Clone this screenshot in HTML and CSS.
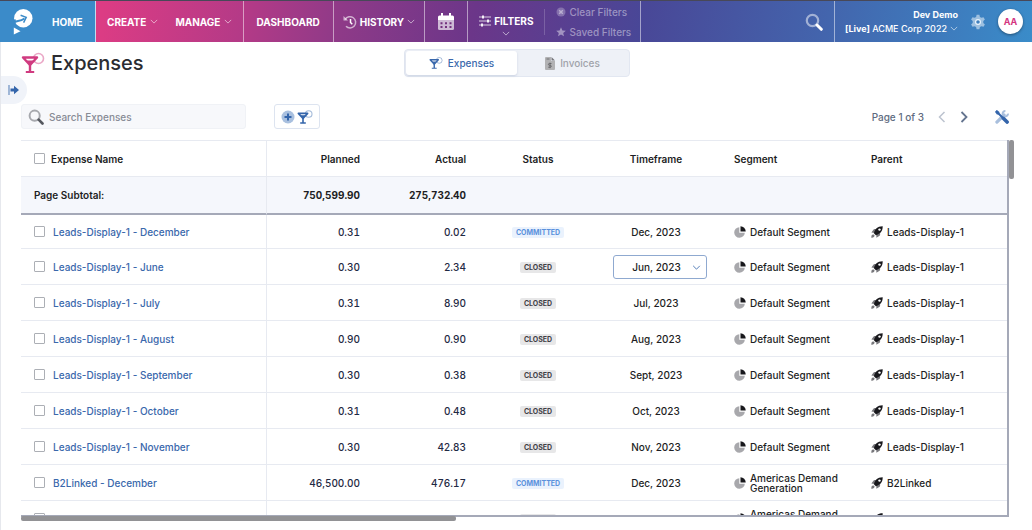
FILE: index.html
```html
<!DOCTYPE html>
<html lang="en">
<head>
<meta charset="utf-8">
<title>Expenses</title>
<link rel="stylesheet" href="styles.css">
</head>
<body>
<svg class="sprite" aria-hidden="true">
  <symbol id="chevron" viewBox="0 0 10 6"><path d="M1 1l4 4 4-4" fill="none" stroke="currentColor"/></symbol>
  <symbol id="glass" viewBox="0 0 24 22"><circle cx="17.500" cy="6.500" r="5" fill="none" stroke="currentColor" stroke-width="1.600" opacity=".45"/><path d="M2 5.500h14L9 13z" fill="#fff" stroke="currentColor" stroke-width="2.400" stroke-linejoin="round"/><path d="M5 8.500h8L9 12.500zM7.800 12h2.400v7h3v2h-8.400v-2h3z" fill="currentColor"/></symbol>
  <symbol id="search" viewBox="0 0 18 18"><circle cx="7.500" cy="7.500" r="5.700" fill="none" stroke="currentColor" stroke-width="2.200" opacity=".5"/><path d="M12 12l4.300 4.300" stroke="currentColor" stroke-width="3" stroke-linecap="round"/></symbol>
  <symbol id="pie" viewBox="0 0 12 12"><path d="M5.300 1.200v5.500h5.500A5.300 5.300 0 1 1 5.300 1.200z" fill="#a8a8ac"/><path d="M6.500.2a5.300 5.300 0 0 1 5.200 5.300H6.500z" fill="#18181c"/></symbol>
  <symbol id="rocket" viewBox="0 0 12 12"><path d="M.4 6.600l2.200-3.200q.4-.5 1-.5h2.600L3.500 7zM5.300 8.700l3.800-2.500v2.600q0 .6-.5 1l-3.200 2z" fill="#77777b"/><path d="M2.900 7.200C4 3.500 6 .3 11.700.3 11.700 6 8.500 8 4.900 9.200z" fill="#18181c"/><circle cx="8.500" cy="3.600" r="1.200" fill="#fff"/><path d="M.3 11.700C.3 9.500.8 8.300 2.300 8.400c1.400.1 1.600 1.400.8 2.300-.7.800-1.700.9-2.800 1z" fill="#77777b"/></symbol>
</svg>

<header class="topbar">
  <nav class="nav" aria-label="Main">
    <a class="nav-item home" href="#">
      <svg class="logo" viewBox="0 0 20 26" aria-hidden="true"><circle cx="10.300" cy="9.300" r="9.200" fill="#fff"/><path d="M0 10.500h3l-1 5-2 1z" fill="#3b8bc9"/><path d="M0 14.500C3 10.500 6 13.500 11.500 9.500" fill="none" stroke="#3b8bc9" stroke-width="2"/><path d="M7.600 6.300l5.600 2.100-2.600 5.200" fill="none" stroke="#3b8bc9" stroke-width="1.500"/><path d="M.8 18.500l6.700 3.700-6.700 3.400z" fill="#fff"/></svg>
      HOME
    </a>
    <div class="nav-group">
      <button class="nav-item" type="button">CREATE <svg class="chev"><use href="#chevron"/></svg></button>
      <button class="nav-item" type="button">MANAGE <svg class="chev"><use href="#chevron"/></svg></button>
    </div>
    <div class="nav-group"><a class="nav-item dashboard" href="#">DASHBOARD</a></div>
    <div class="nav-group">
      <button class="nav-item history" type="button">
        <svg class="icon-14" viewBox="0 0 14 14" aria-hidden="true"><path d="M2.200 4.500A5.600 5.600 0 1 1 3 11.200" fill="none" stroke="#fff" stroke-width="1.500" opacity=".6"/><path d="M.5 1v4.500H5z" fill="#fff" opacity=".6"/><path d="M7.500 4v3.500l1.800 1.800" fill="none" stroke="#fff" stroke-width="1.500"/></svg>
        HISTORY <svg class="chev"><use href="#chevron"/></svg>
      </button>
    </div>
    <div class="nav-group">
      <button class="nav-item" type="button" aria-label="Calendar">
        <svg class="calendar" viewBox="0 0 16 18" aria-hidden="true"><path d="M0 4q0-1.500 1.500-1.500H3V0h2v2.500h6V0h2v2.500h1.500Q16 2.500 16 4v3H0z" fill="#fff"/><path d="M0 7h16v8.500q0 1.500-1.500 1.500h-13Q0 17 0 15.500z" fill="#fff" opacity=".65"/><path d="M2.500 9.300h2v2h-2zm4.500 0h2v2H7zm4.500 0h2v2h-2zM2.500 13h2v2h-2zM7 13h2v2H7zm4.500 0h2v2h-2z" fill="#73307f"/></svg>
      </button>
    </div>
    <div class="nav-group filters">
      <button class="nav-item filter-btn" type="button">
        <span class="filter-label"><svg class="icon-12" viewBox="0 0 12 12" aria-hidden="true"><path d="M0 2h12M0 6h12M0 10h12" stroke="#fff" opacity=".75"/><path d="M4 .5v3M9 4.500v3M3 8.500v3" stroke="#fff" stroke-width="1.800"/></svg>FILTERS</span>
        <svg class="chev"><use href="#chevron"/></svg>
      </button>
      <div class="filter-links">
        <button type="button"><svg class="icon-10" viewBox="0 0 10 10" aria-hidden="true"><circle cx="5" cy="5" r="4.500" fill="currentColor" opacity=".6"/><path d="M3.200 3.200l3.600 3.600M6.800 3.200L3.200 6.800" stroke="currentColor" stroke-width="1.500"/></svg>Clear Filters</button>
        <button type="button"><svg class="icon-10" viewBox="0 0 10 10" aria-hidden="true"><path d="M5 .3l1.400 3.100 3.400.3-2.600 2.200.8 3.400L5 7.500 2 9.300l.8-3.400L.2 3.700l3.400-.3z" fill="currentColor"/></svg>Saved Filters</button>
      </div>
    </div>
  </nav>
  <button class="nav-search" type="button" aria-label="Search"><svg class="icon-18"><use href="#search"/></svg></button>
  <div class="account">
    <div class="account-text">
      <strong>Dev Demo</strong>
      <button type="button"><span><b>[Live]</b> ACME Corp 2022</span><svg class="chev"><use href="#chevron"/></svg></button>
    </div>
    <button class="gear" type="button" aria-label="Settings"><svg viewBox="0 0 16 16" aria-hidden="true"><path d="M6.600.8h2.800l.5 2.100 1.500.9 2.100-.6 1.400 2.400L13.300 7.100v1.800l1.600 1.500-1.400 2.400-2.100-.6-1.500.9-.5 2.100H6.600l-.5-2.100-1.500-.9-2.100.6-1.400-2.400 1.600-1.500V7.100L1.100 5.600l1.400-2.400 2.100.6 1.500-.9z" fill="#fff" opacity=".5"/><circle cx="8" cy="8" r="3" fill="#e9f3fb"/><circle cx="8" cy="8" r="1.800" fill="#3f7fbd"/></svg></button>
    <button class="avatar" type="button">AA</button>
  </div>
</header>

<main class="page">
  <button class="drawer" type="button" aria-label="Open side panel"><svg viewBox="0 0 12 10" aria-hidden="true"><path d="M1 0v10" stroke="#7d9cc9" stroke-width="1.400"/><path d="M2.500 3.400H6V.8L11 5 6 9.200V6.600H2.500z" fill="#3465ab"/></svg></button>
  <div class="heading">
    <h1><svg class="title-icon"><use href="#glass"/></svg>Expenses</h1>
    <div class="tabs">
      <button class="tab active" type="button"><svg class="icon-14"><use href="#glass"/></svg>Expenses</button>
      <button class="tab" type="button"><svg class="invoice" viewBox="0 0 10 13" aria-hidden="true"><path d="M1 0h5v4h4v8q0 1-1 1H1q-1 0-1-1V1q0-1 1-1z" fill="#b2b2b4"/><path d="M6.500 0L10 3.500H6.500z" fill="#77777b"/><path d="M1.500 2h3M6.500 6.500H4.300q-.9.100-.9.900t.9.900h1q1 .1 1 1t-1 .9H3.200M5 5.600v5.600" fill="none" stroke="#66666a" stroke-width=".900"/></svg>Invoices</button>
    </div>
  </div>

  <div class="toolbar">
    <label class="search-box"><svg class="icon-16"><use href="#search"/></svg><input type="search" placeholder="Search Expenses" aria-label="Search Expenses"></label>
    <button class="add" type="button" aria-label="Add expense"><svg class="plus" viewBox="0 0 14 14" aria-hidden="true"><circle cx="7" cy="7" r="6.500" fill="#a9c0df"/><path d="M7 3.500v7M3.500 7h7" stroke="#3465ab" stroke-width="2"/></svg><svg class="icon-16"><use href="#glass"/></svg></button>
    <div class="pager">
      <span>Page 1 of 3</span>
      <button class="prev" type="button" aria-label="Previous page"><svg viewBox="0 0 8 12" aria-hidden="true"><path d="M6.500 1l-5 5 5 5" fill="none" stroke="#bcc3cf" stroke-width="1.500"/></svg></button>
      <button class="next" type="button" aria-label="Next page"><svg viewBox="0 0 8 12" aria-hidden="true"><path d="M1.500 1l5 5-5 5" fill="none" stroke="#64748f" stroke-width="1.800"/></svg></button>
      <button class="tools" type="button" aria-label="Table settings"><svg viewBox="0 0 14 14" aria-hidden="true"><path d="M1.900 12.100L9 5" stroke="#a9bfdd" stroke-width="3.200" stroke-linecap="round"/><path d="M13 3.600A2.700 2.700 0 1 1 10.400 1" fill="none" stroke="#a9bfdd" stroke-width="2"/><path d="M1 1l6.500 6.500" stroke="#3465ab" stroke-width="2"/><path d="M.1 1.900L1.900.1 4.400 1.900v1.700l-.8.800H1.900z" fill="#3465ab"/><path d="M8.300 8.300l3.800 3.800" stroke="#3465ab" stroke-width="3.600" stroke-linecap="round"/></svg></button>
    </div>
  </div>

  <div class="grid">
    <div class="grid-view">
    <table>
      <colgroup><col class="c-name"><col class="c-planned"><col class="c-actual"><col class="c-status"><col class="c-time"><col class="c-segment"><col></colgroup>
      <thead>
        <tr><th scope="col"><label class="pick"><input type="checkbox">Expense Name</label></th><th class="num-head" scope="col">Planned</th><th class="num-head" scope="col">Actual</th><th class="mid" scope="col">Status</th><th class="mid" scope="col">Timeframe</th><th class="seg" scope="col">Segment</th><th class="par" scope="col">Parent</th></tr>
        <tr class="subtotal"><th scope="row">Page Subtotal:</th><td class="num">750,599.90</td><td class="num">275,732.40</td><td></td><td></td><td></td><td></td></tr>
      </thead>
      <tbody>
        <tr><td><div class="name"><input type="checkbox" aria-label="Select row"><a href="#">Leads-Display-1 - December</a></div></td><td class="num">0.31</td><td class="num">0.02</td><td class="mid"><span class="badge committed">COMMITTED</span></td><td class="mid">Dec, 2023</td><td class="seg"><div class="ref"><svg><use href="#pie"/></svg>Default Segment</div></td><td class="par"><div class="ref"><svg><use href="#rocket"/></svg>Leads-Display-1</div></td></tr>
        <tr><td><div class="name"><input type="checkbox" aria-label="Select row"><a href="#">Leads-Display-1 - June</a></div></td><td class="num">0.30</td><td class="num">2.34</td><td class="mid"><span class="badge">CLOSED</span></td><td class="mid"><div class="month"><select aria-label="Timeframe"><option>Jun, 2023</option></select><svg class="chev"><use href="#chevron"/></svg></div></td><td class="seg"><div class="ref"><svg><use href="#pie"/></svg>Default Segment</div></td><td class="par"><div class="ref"><svg><use href="#rocket"/></svg>Leads-Display-1</div></td></tr>
        <tr><td><div class="name"><input type="checkbox" aria-label="Select row"><a href="#">Leads-Display-1 - July</a></div></td><td class="num">0.31</td><td class="num">8.90</td><td class="mid"><span class="badge">CLOSED</span></td><td class="mid">Jul, 2023</td><td class="seg"><div class="ref"><svg><use href="#pie"/></svg>Default Segment</div></td><td class="par"><div class="ref"><svg><use href="#rocket"/></svg>Leads-Display-1</div></td></tr>
        <tr><td><div class="name"><input type="checkbox" aria-label="Select row"><a href="#">Leads-Display-1 - August</a></div></td><td class="num">0.90</td><td class="num">0.90</td><td class="mid"><span class="badge">CLOSED</span></td><td class="mid">Aug, 2023</td><td class="seg"><div class="ref"><svg><use href="#pie"/></svg>Default Segment</div></td><td class="par"><div class="ref"><svg><use href="#rocket"/></svg>Leads-Display-1</div></td></tr>
        <tr><td><div class="name"><input type="checkbox" aria-label="Select row"><a href="#">Leads-Display-1 - September</a></div></td><td class="num">0.30</td><td class="num">0.38</td><td class="mid"><span class="badge">CLOSED</span></td><td class="mid">Sept, 2023</td><td class="seg"><div class="ref"><svg><use href="#pie"/></svg>Default Segment</div></td><td class="par"><div class="ref"><svg><use href="#rocket"/></svg>Leads-Display-1</div></td></tr>
        <tr><td><div class="name"><input type="checkbox" aria-label="Select row"><a href="#">Leads-Display-1 - October</a></div></td><td class="num">0.31</td><td class="num">0.48</td><td class="mid"><span class="badge">CLOSED</span></td><td class="mid">Oct, 2023</td><td class="seg"><div class="ref"><svg><use href="#pie"/></svg>Default Segment</div></td><td class="par"><div class="ref"><svg><use href="#rocket"/></svg>Leads-Display-1</div></td></tr>
        <tr><td><div class="name"><input type="checkbox" aria-label="Select row"><a href="#">Leads-Display-1 - November</a></div></td><td class="num">0.30</td><td class="num">42.83</td><td class="mid"><span class="badge">CLOSED</span></td><td class="mid">Nov, 2023</td><td class="seg"><div class="ref"><svg><use href="#pie"/></svg>Default Segment</div></td><td class="par"><div class="ref"><svg><use href="#rocket"/></svg>Leads-Display-1</div></td></tr>
        <tr><td><div class="name"><input type="checkbox" aria-label="Select row"><a href="#">B2Linked - December</a></div></td><td class="num">46,500.00</td><td class="num">476.17</td><td class="mid"><span class="badge committed">COMMITTED</span></td><td class="mid">Dec, 2023</td><td class="seg"><div class="ref"><svg><use href="#pie"/></svg>Americas Demand Generation</div></td><td class="par"><div class="ref"><svg><use href="#rocket"/></svg>B2Linked</div></td></tr>
        <tr><td><div class="name"><input type="checkbox" aria-label="Select row"><a href="#">B2Linked - July</a></div></td><td class="num">45,550.00</td><td class="num">0.00</td><td class="mid"><span class="badge">CLOSED</span></td><td class="mid"></td><td class="seg"><div class="ref"><svg><use href="#pie"/></svg>Americas Demand Generation</div></td><td class="par"><div class="ref"><svg><use href="#rocket"/></svg>B2Linked</div></td></tr>
      </tbody>
    </table>
    </div>
    <span class="thumb-v"></span>
    <span class="thumb-h"></span>
  </div>
</main>
</body>
</html>
```
FILE: styles.css
```css
* { box-sizing: border-box; }

body {
  margin: 0;
  height: 100vh;
  display: flex;
  flex-direction: column;
  overflow: hidden;
  background: #fff;
  color: #1d1e24;
  font: 500 10px/14px Inter, "Liberation Sans", sans-serif;
}

button, input, select { font: inherit; color: inherit; }
button { border: 0; padding: 0; background: none; cursor: pointer; }
a { color: inherit; text-decoration: none; }
svg { display: block; flex: none; }
.sprite { position: absolute; width: 0; height: 0; }
.chev { width: 8px; height: 5px; opacity: .7; }
.icon-10 { width: 10px; height: 10px; }
.icon-12 { width: 12px; height: 12px; }
.icon-14 { width: 14px; height: 14px; }
.icon-16 { width: 16px; height: 16px; }
.icon-18 { width: 18px; height: 18px; }

/* Top bar */
.topbar {
  flex: none;
  display: flex;
  height: 42px;
  border-top: 1px solid #484858;
  color: #fff;
  background: linear-gradient(100deg, #dc3c84 10%, #b33a87 24%, #8f3a88 33%, #6b3689 46%, #494797 62%, #4365ad 80%, #3a8cc9 100%);
}
.nav { display: flex; }
.nav-group { display: flex; border-right: 1px solid #ffffff80; }
.nav-item { display: flex; align-items: center; gap: 4px; padding: 0 11px; font-weight: 700; }
.nav-group > .nav-item + .nav-item { padding-left: 6px; }
.home { width: 96px; padding: 0 0 0 13px; gap: 19px; background: #3b8bc9; border-right: 1px solid #ffffffb0; }
.logo { width: 20px; height: 26px; }
.dashboard { padding: 0 13px 0 12px; }
.history { gap: 3px; padding: 0 9px; }
.calendar { width: 16px; height: 18px; margin: 0 2px; }
.filters { align-items: center; }
.filter-btn { flex-direction: column; gap: 3px; padding-top: 7px; }
.filter-label { display: flex; align-items: center; gap: 3px; }
.filter-links {
  display: flex;
  flex-direction: column;
  justify-content: center;
  gap: 6px;
  height: 26px;
  padding: 0 9px 0 11px;
  border-left: 1px solid #ffffff30;
  color: #ffffff70;
}
.filter-links button { display: flex; align-items: center; gap: 3px; }
.nav-search { margin-left: auto; padding: 0 11px; }
.account { display: flex; align-items: center; gap: 12px; padding: 0 9px 0 10px; border-left: 1px solid #ffffff80; }
.account-text { display: flex; flex-direction: column; align-items: flex-end; font-size: 9px; }
.account-text button { display: flex; align-items: center; gap: 3px; }
.gear svg { width: 16px; height: 16px; }
.avatar {
  width: 25px;
  height: 25px;
  border-radius: 50%;
  background: #fff;
  color: #d4357f;
  font-size: 9px;
  font-weight: 700;
  box-shadow: 0 1px 3px #0006;
}

/* Page */
.page {
  position: relative;
  flex: 1;
  min-height: 0;
  display: flex;
  flex-direction: column;
  padding: 6px 23px 13px 20px;
  border-left: 1px solid #e6e8ed;
}
.drawer {
  position: absolute;
  left: 0;
  top: 34px;
  width: 26px;
  height: 28px;
  padding-left: 7px;
  border-radius: 0 14px 14px 0;
  background: #f0f3f9;
}
.drawer svg { width: 12px; height: 10px; }

.heading { position: relative; display: flex; align-items: center; justify-content: center; height: 30px; }
h1 {
  position: absolute;
  left: 0;
  display: flex;
  align-items: center;
  gap: 6px;
  margin: 0;
  font-size: 20px;
  line-height: 28px;
  font-weight: 500;
  color: #2b2c31;
}
.title-icon { width: 24px; height: 22px; color: #d03b80; }
.tabs { display: flex; width: 226px; padding: 1px; border-radius: 4px; background: #eef1f7; border: 1px solid #e2e7f1; margin-left: 4px; }
.tab { flex: 1; display: flex; align-items: center; justify-content: center; gap: 5px; height: 24px; border-radius: 3px; color: #a0a3aa; }
.tab.active { background: #fff; color: #3a68ac; box-shadow: 0 1px 2px #a9b6d080; }
.invoice { width: 10px; height: 13px; }

.toolbar { display: flex; align-items: center; gap: 28px; margin-top: 26px; height: 25px; }
.search-box { display: flex; align-items: center; gap: 5px; width: 225px; height: 25px; padding: 0 6px; border: 1px solid #f0f2f6; border-radius: 3px; background: #f7f8fb; color: #55585f; }
.search-box input { flex: 1; min-width: 0; padding: 0; border: 0; background: none; outline: 0; }
.search-box input::placeholder { color: #878b95; opacity: 1; }
.add { display: flex; align-items: center; justify-content: center; gap: 2px; width: 46px; height: 25px; border: 1px solid #dde4f0; border-radius: 3px; color: #3465ab; }
.plus { width: 14px; height: 14px; }
.pager { display: flex; align-items: center; margin-left: auto; color: #606b80; }
.pager svg { width: 8px; height: 12px; }
.prev, .next { margin-left: 14px; }
.tools { margin-left: 27px; }
.pager .tools svg { width: 14px; height: 14px; }

/* Grid */
.grid { position: relative; flex: 1; min-height: 0; margin-top: 11px; }
.grid-view { height: 100%; overflow: hidden; border: solid #a5a9b8; border-width: 0 2px 2px 0; }
.thumb-v, .thumb-h { position: absolute; background: #929295; border-radius: 2px; }
.thumb-v { top: 0; right: -5px; width: 5px; height: 39px; }
.thumb-h { left: 0; bottom: -4px; width: 44%; height: 5px; }
table { width: 100%; table-layout: fixed; border-collapse: separate; border-spacing: 0; }
.c-name { width: 246px; }
.c-planned, .c-actual { width: 106px; }
.c-status, .c-time { width: 118px; }
.c-segment { width: 142px; }
th, td { height: 36px; padding: 0; text-align: left; font-weight: 500; border-bottom: 1px solid #e7eaf1; }
th { font-weight: 600; }
thead tr:first-child > th { height: 37px; border-top: 1px solid #e7eaf1; }
tbody tr:first-child > td { height: 34px; }
th:first-child, td:first-child { padding-left: 13px; border-right: 1px solid #e7eaf1; }
.subtotal th, .subtotal td { height: 38px; background: #f5f7fc; border-bottom: 2px solid #a5a9b8; }
.pick, .name, .ref { display: flex; align-items: center; }
.pick { gap: 6px; }
.name { gap: 8px; color: #3a68ac; }
input[type="checkbox"] { appearance: none; flex: none; width: 11px; height: 11px; margin: 0; border: 1px solid #acafb5; border-radius: 1px; background: #fff; }
th.num-head, td.num { text-align: right; padding-right: 13px; }
td.num { font-variant-numeric: tabular-nums; color: #1f2a44; }
.subtotal td.num { font-weight: 700; color: #1d1e24; }
th.mid, td.mid { text-align: center; }
th.seg, td.seg { padding-left: 19px; }
th.par, td.par { padding-left: 14px; }
.ref { gap: 4px; line-height: 10px; }
.ref svg { width: 12px; height: 12px; }
td.seg .ref { max-width: 110px; }
.badge { display: inline-block; padding: 0 4px; border-radius: 2px; background: #e7e7e8; color: #3f4046; font-size: 7px; line-height: 11px; font-weight: 700; vertical-align: middle; }
.badge.committed { background: #eaf2fd; color: #5a91dc; }
.month { position: relative; width: 94px; margin: 0 0 0 16px; }
.month select { display: block; width: 100%; height: 24px; padding: 0 11px 0 4px; appearance: none; border: 1px solid #8fa9d0; border-radius: 3px; background: #fff; text-align-last: center; }
.month .chev { position: absolute; right: 6px; top: 10px; width: 9px; color: #3465ab; opacity: 1; }
```
